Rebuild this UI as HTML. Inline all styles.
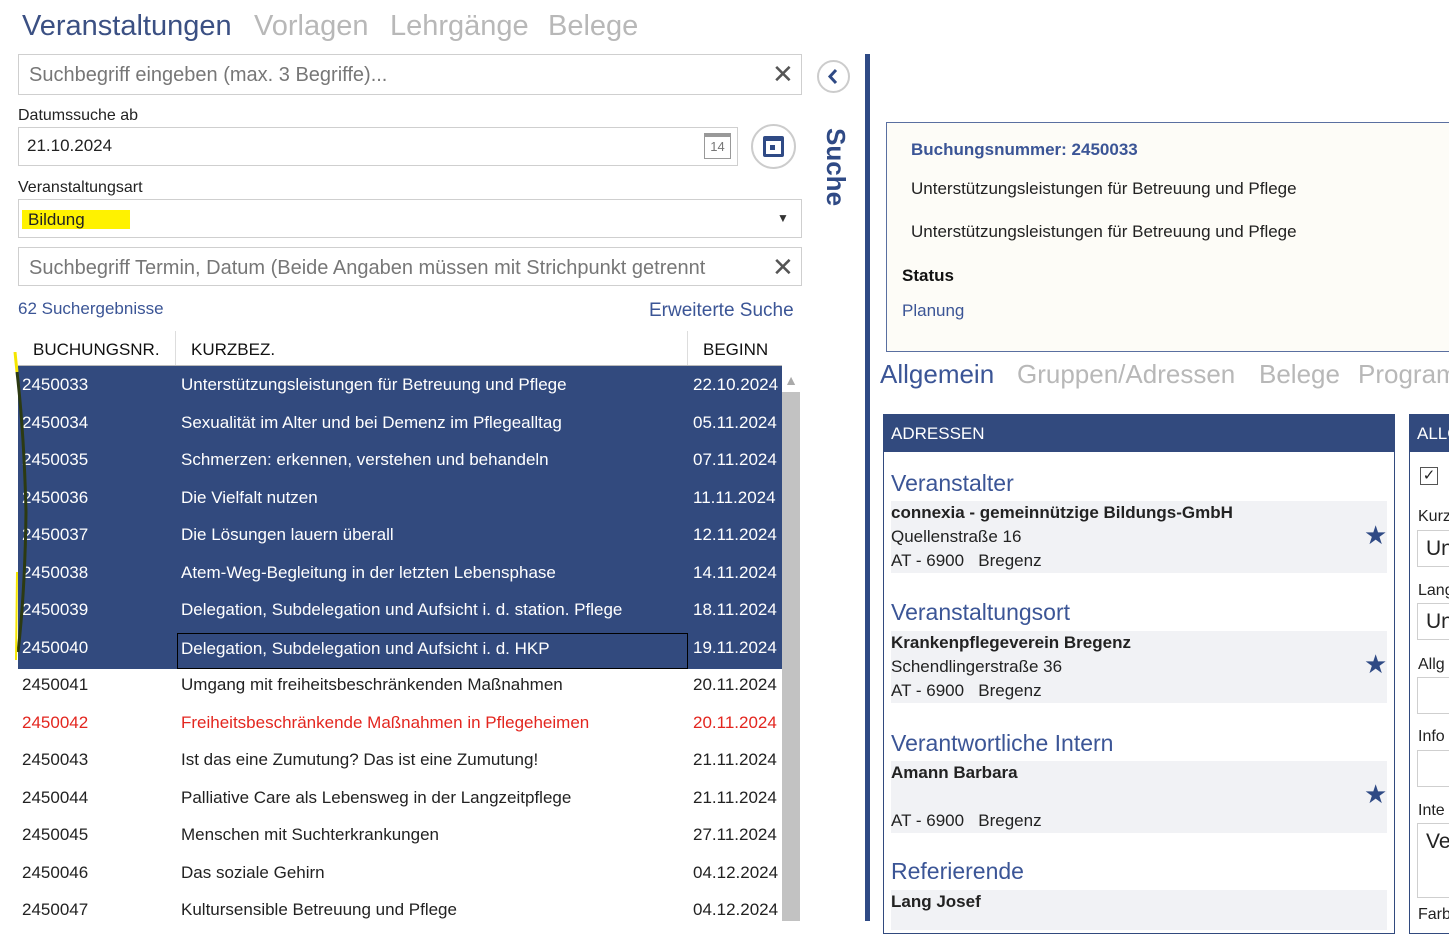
<!DOCTYPE html>
<html><head><meta charset="utf-8"><style>
*{margin:0;padding:0;box-sizing:border-box}
body{width:1449px;height:921px;overflow:hidden;background:#fff;font-family:"Liberation Sans",sans-serif;color:#222;position:relative}
.a{position:absolute;white-space:nowrap}
.inp{position:absolute;border:1px solid #cfcfcf;background:#fff}
.ph{color:#777;font-size:20px}
.row{position:absolute;left:18px;width:764px;height:37.5px;font-size:17px;line-height:37.5px}
.row span{position:absolute}
.sel{background:#324a7e;color:#fff}
.red{color:#e3261f}
.lbl{font-size:16px;color:#222}
.box{position:absolute;left:891px;width:496px;background:#f1f2f5;font-size:17px;line-height:24px}
.h{position:absolute;left:891px;font-size:23px;color:#3b5596}
.star{position:absolute;left:1364px;color:#2f4a85;font-size:26px}
</style></head><body>
<div class="a" style="left:22px;top:10px;font-size:29px;color:#3b5083">Veranstaltungen</div>
<div class="a" style="left:254px;top:10px;font-size:29px;color:#b8b8b8">Vorlagen</div>
<div class="a" style="left:390px;top:10px;font-size:29px;color:#b8b8b8">Lehrgänge</div>
<div class="a" style="left:548px;top:10px;font-size:29px;color:#b8b8b8">Belege</div>

<div class="inp" style="left:18px;top:54px;width:784px;height:41px"></div>
<div class="a ph" style="left:29px;top:64px">Suchbegriff eingeben (max. 3 Begriffe)...</div>
<div class="a" style="left:772px;top:59px;font-size:26px;color:#555">✕</div>
<div class="a" style="left:817px;top:60px;width:33px;height:33px;border:2px solid #ccc;border-radius:50%"></div>
<svg class="a" style="left:817px;top:60px" width="33" height="33"><path d="M19 10 L13 16.5 L19 23" fill="none" stroke="#2f4a85" stroke-width="3"/></svg>

<div class="a lbl" style="left:18px;top:107px">Datumssuche ab</div>
<div class="inp" style="left:18px;top:127px;width:720px;height:39px"></div>
<div class="a" style="left:27px;top:136px;font-size:17px">21.10.2024</div>
<div class="a" style="left:704px;top:133px;width:27px;height:26px;border:1px solid #999;border-top:4px solid #999;font-size:13px;color:#777;text-align:center;line-height:20px">14</div>
<div class="a" style="left:751px;top:124px;width:45px;height:45px;border:2px solid #ccc;border-radius:50%"></div>
<div class="a" style="left:763px;top:136px;width:21px;height:21px;border:3px solid #2f4a85;border-top-width:5px;border-radius:2px"><div style="position:absolute;left:4px;top:4px;width:5px;height:5px;background:#2f4a85"></div></div>

<div class="a lbl" style="left:18px;top:179px">Veranstaltungsart</div>
<div class="inp" style="left:18px;top:199px;width:784px;height:39px"></div>
<div class="a" style="left:22px;top:210px;width:108px;height:19px;background:#fff200"></div>
<div class="a" style="left:28px;top:210px;font-size:17px">Bildung</div>
<div class="a" style="left:777px;top:211px;font-size:12px;color:#333">▼</div>

<div class="inp" style="left:18px;top:247px;width:784px;height:39px"></div>
<div class="a ph" style="left:29px;top:257px;width:730px;overflow:hidden">Suchbegriff Termin, Datum (Beide Angaben müssen mit Strichpunkt getrennt</div>
<div class="a" style="left:772px;top:252px;font-size:26px;color:#555">✕</div>

<div class="a" style="left:18px;top:299px;font-size:17px;color:#3b5596">62 Suchergebnisse</div>
<div class="a" style="left:649px;top:300px;font-size:19px;color:#3b5596">Erweiterte Suche</div>

<div class="a" style="left:33px;top:340px;font-size:17px;color:#111">BUCHUNGSNR.</div>
<div class="a" style="left:175px;top:331px;width:1px;height:35px;background:#ddd"></div>
<div class="a" style="left:191px;top:340px;font-size:17px;color:#111">KURZBEZ.</div>
<div class="a" style="left:687px;top:331px;width:1px;height:35px;background:#ddd"></div>
<div class="a" style="left:703px;top:340px;font-size:17px;color:#111">BEGINN</div>
<div class="a" style="left:18px;top:365px;width:764px;height:2px;background:#bbb"></div>
<div class="a" style="left:782px;top:372px;width:18px;height:549px;background:#c2c2c2"></div>
<div class="a" style="left:782px;top:372px;width:18px;height:20px;background:#fff;color:#aaa;font-size:14px;text-align:center">▲</div>

<div class="row sel" style="top:366px"><span style="left:4px">2450033</span><span style="left:163px">Unterstützungsleistungen für Betreuung und Pflege</span><span style="left:675px">22.10.2024</span></div>
<div class="row sel" style="top:403.5px"><span style="left:4px">2450034</span><span style="left:163px">Sexualität im Alter und bei Demenz im Pflegealltag</span><span style="left:675px">05.11.2024</span></div>
<div class="row sel" style="top:441px"><span style="left:4px">2450035</span><span style="left:163px">Schmerzen: erkennen, verstehen und behandeln</span><span style="left:675px">07.11.2024</span></div>
<div class="row sel" style="top:478.5px"><span style="left:4px">2450036</span><span style="left:163px">Die Vielfalt nutzen</span><span style="left:675px">11.11.2024</span></div>
<div class="row sel" style="top:516px"><span style="left:4px">2450037</span><span style="left:163px">Die Lösungen lauern überall</span><span style="left:675px">12.11.2024</span></div>
<div class="row sel" style="top:553.5px"><span style="left:4px">2450038</span><span style="left:163px">Atem-Weg-Begleitung in der letzten Lebensphase</span><span style="left:675px">14.11.2024</span></div>
<div class="row sel" style="top:591px"><span style="left:4px">2450039</span><span style="left:163px">Delegation, Subdelegation und Aufsicht i. d. station. Pflege</span><span style="left:675px">18.11.2024</span></div>
<div class="row sel" style="top:628.5px;height:40px"><span style="left:4px">2450040</span><span style="left:159px;top:4px;width:511px;height:36px;border:1.5px solid #000;line-height:30px;padding-left:3px">Delegation, Subdelegation und Aufsicht i. d. HKP</span><span style="left:675px">19.11.2024</span></div>
<div class="row" style="top:666px"><span style="left:4px">2450041</span><span style="left:163px">Umgang mit freiheitsbeschränkenden Maßnahmen</span><span style="left:675px">20.11.2024</span></div>
<div class="row red" style="top:703.5px"><span style="left:4px">2450042</span><span style="left:163px">Freiheitsbeschränkende Maßnahmen in Pflegeheimen</span><span style="left:675px">20.11.2024</span></div>
<div class="row" style="top:741px"><span style="left:4px">2450043</span><span style="left:163px">Ist das eine Zumutung? Das ist eine Zumutung!</span><span style="left:675px">21.11.2024</span></div>
<div class="row" style="top:778.5px"><span style="left:4px">2450044</span><span style="left:163px">Palliative Care als Lebensweg in der Langzeitpflege</span><span style="left:675px">21.11.2024</span></div>
<div class="row" style="top:816px"><span style="left:4px">2450045</span><span style="left:163px">Menschen mit Suchterkrankungen</span><span style="left:675px">27.11.2024</span></div>
<div class="row" style="top:853.5px"><span style="left:4px">2450046</span><span style="left:163px">Das soziale Gehirn</span><span style="left:675px">04.12.2024</span></div>
<div class="row" style="top:891px"><span style="left:4px">2450047</span><span style="left:163px">Kultursensible Betreuung und Pflege</span><span style="left:675px">04.12.2024</span></div>
<svg class="a" style="left:10px;top:352px" width="20" height="312"><path d="M5 0 L7 20" stroke="#f5e600" stroke-width="3" fill="none"/><path d="M7 20 Q14 80 16 160 Q15 240 8 300" stroke="#2c3a12" stroke-width="3" fill="none"/><path d="M7 220 L6 308" stroke="#f5e600" stroke-width="2" fill="none"/></svg>

<div class="a" style="top:128px;font-size:26px;font-weight:bold;color:#2f4a85;transform:rotate(90deg);transform-origin:0 0;left:851px">Suche</div>
<div class="a" style="left:865px;top:54px;width:5px;height:867px;background:#2f4a85"></div>

<div class="a" style="left:886px;top:122px;width:580px;height:230px;background:#fdfcf7;border:1.5px solid #5a6fa0"></div>
<div class="a" style="left:911px;top:140px;font-size:17px;font-weight:bold;color:#3b5596">Buchungsnummer: 2450033</div>
<div class="a" style="left:911px;top:179px;font-size:17px">Unterstützungsleistungen für Betreuung und Pflege</div>
<div class="a" style="left:911px;top:222px;font-size:17px">Unterstützungsleistungen für Betreuung und Pflege</div>
<div class="a" style="left:902px;top:266px;font-size:17px;font-weight:bold;color:#111">Status</div>
<div class="a" style="left:902px;top:301px;font-size:17px;color:#3b5596">Planung</div>

<div class="a" style="left:880px;top:359px;font-size:26px;color:#3b5596">Allgemein</div>
<div class="a" style="left:1017px;top:359px;font-size:26px;color:#b8b8b8">Gruppen/Adressen</div>
<div class="a" style="left:1259px;top:359px;font-size:26px;color:#b8b8b8">Belege</div>
<div class="a" style="left:1358px;top:359px;font-size:26px;color:#b8b8b8">Programm</div>

<div class="a" style="left:883px;top:414px;width:512px;height:520px;border:1.5px solid #324a7e"></div>
<div class="a" style="left:883px;top:414px;width:512px;height:38px;background:#324a7e;color:#fff;font-size:17px;line-height:40px;padding-left:8px">ADRESSEN</div>
<div class="h" style="top:470px">Veranstalter</div>
<div class="box" style="top:501px;height:72px"><b>connexia - gemeinnützige Bildungs-GmbH</b><br>Quellenstraße 16<br>AT - 6900&nbsp;&nbsp;&nbsp;Bregenz</div>
<div class="star" style="top:520px">★</div>
<div class="h" style="top:599px">Veranstaltungsort</div>
<div class="box" style="top:631px;height:72px"><b>Krankenpflegeverein Bregenz</b><br>Schendlingerstraße 36<br>AT - 6900&nbsp;&nbsp;&nbsp;Bregenz</div>
<div class="star" style="top:649px">★</div>
<div class="h" style="top:730px">Verantwortliche Intern</div>
<div class="box" style="top:761px;height:72px"><b>Amann Barbara</b><br>&nbsp;<br>AT - 6900&nbsp;&nbsp;&nbsp;Bregenz</div>
<div class="star" style="top:779px">★</div>
<div class="h" style="top:858px">Referierende</div>
<div class="box" style="top:890px;height:40px"><b>Lang Josef</b></div>

<div class="a" style="left:1409px;top:414px;width:60px;height:520px;border:1.5px solid #324a7e"></div>
<div class="a" style="left:1409px;top:414px;width:60px;height:38px;background:#324a7e;color:#fff;font-size:17px;line-height:40px;padding-left:8px">ALLGEMEIN</div>
<div class="a" style="left:1420px;top:467px;width:18px;height:18px;border:1.5px solid #555;font-size:15px;line-height:15px;text-align:center">✓</div>
<div class="a lbl" style="left:1418px;top:508px">Kurzbez.</div>
<div class="inp" style="left:1417px;top:530px;width:40px;height:37px"></div><div class="a" style="left:1426px;top:537px;font-size:21px">Un</div>
<div class="a lbl" style="left:1418px;top:582px">Lang</div>
<div class="inp" style="left:1417px;top:603px;width:40px;height:37px"></div><div class="a" style="left:1426px;top:610px;font-size:21px">Un</div>
<div class="a lbl" style="left:1418px;top:656px">Allg</div>
<div class="inp" style="left:1417px;top:677px;width:40px;height:37px"></div>
<div class="a lbl" style="left:1418px;top:728px">Info</div>
<div class="inp" style="left:1417px;top:750px;width:40px;height:37px"></div>
<div class="a lbl" style="left:1418px;top:802px">Inte</div>
<div class="inp" style="left:1417px;top:823px;width:40px;height:75px"></div><div class="a" style="left:1426px;top:830px;font-size:21px">Ve</div>
<div class="a lbl" style="left:1418px;top:906px">Farb</div>
</body></html>
